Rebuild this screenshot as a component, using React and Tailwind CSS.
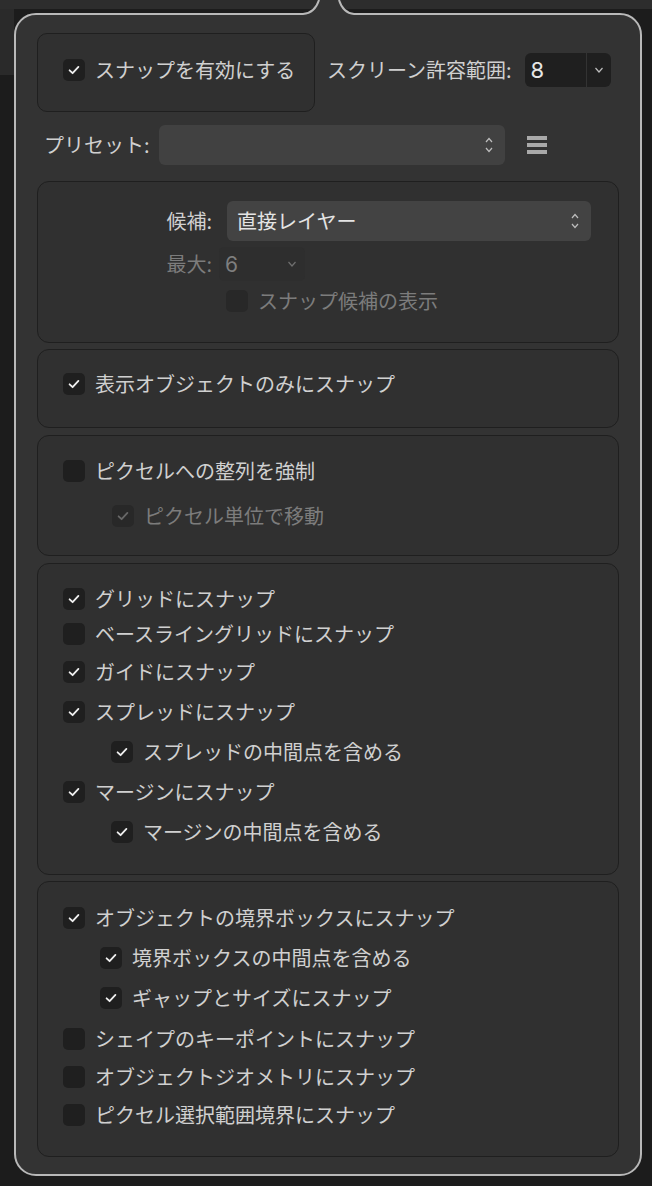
import React from "react";

const Check = ({ checked, dim }) => (
  <span
    className={`flex h-[22px] w-[22px] shrink-0 items-center justify-center rounded-[5px] ${
      dim ? "bg-[#282828]" : "bg-[#1f1f1f]"
    }`}
  >
    {checked && (
      <svg width="14" height="14" viewBox="0 0 14 14">
        <path
          d="M2.6 7.3 L5.6 10.2 L11.4 3.9"
          fill="none"
          stroke={dim ? "#676767" : "#efefef"}
          strokeWidth="1.8"
          strokeLinecap="round"
          strokeLinejoin="round"
        />
      </svg>
    )}
  </span>
);

const Row = ({ label, checked, dim, className = "" }) => (
  <div className={`flex h-[22px] items-center gap-[10px] ${className}`}>
    <Check checked={checked} dim={dim} />
    <span className={`whitespace-nowrap leading-none ${dim ? "text-[#7c7c7c]" : "text-[#d0d0d0]"}`}>
      {label}
    </span>
  </div>
);

const UpDown = () => (
  <svg width="10" height="20" viewBox="0 0 10 20">
    <path d="M2 7 L5 3.5 L8 7" fill="none" stroke="#bdbdbd" strokeWidth="1.2" />
    <path d="M2 13 L5 16.5 L8 13" fill="none" stroke="#bdbdbd" strokeWidth="1.2" />
  </svg>
);

const Down = ({ color = "#bdbdbd" }) => (
  <svg width="10" height="8" viewBox="0 0 10 8">
    <path d="M1.5 2 L5 6 L8.5 2" fill="none" stroke={color} strokeWidth="1.2" />
  </svg>
);

const Group = ({ className = "", children }) => (
  <div className={`rounded-[12px] border border-[#1f1f1f] bg-[#303030] ${className}`}>{children}</div>
);

export default function App() {
  return (
    <div className="relative h-[1186px] w-[652px] overflow-hidden bg-[#1c1c1c] font-['Noto_Sans_CJK_JP',sans-serif] text-[20px]">
      {/* fond derrière le popover */}
      <div className="h-[9px] bg-[#2d2d2d]" />
      <div className="flex">
        <div className="h-[66px] w-[14px] bg-[#2a2a2a]" />
      </div>

      {/* popover */}
      <div className="absolute left-[14px] top-[13px] h-[1163px] w-[628px] rounded-[22px] border-2 border-[#b9b9b9] bg-[#333333] px-[21px] pt-[18px]">
        {/* pointe */}
        <svg className="absolute left-[274px] top-[-15px]" width="70" height="18" viewBox="0 0 70 18">
          <path d="M6 18 L6 14 L13 14 Q25 13 29 0 L49 0 Q53 13 64 14 L66 14 L66 18 Z" fill="#333333" />
          <path d="M4 14 L13 14 Q25 13 29 0" fill="none" stroke="#b9b9b9" strokeWidth="2" />
          <path d="M49 0 Q53 13 64 14 L68 14" fill="none" stroke="#b9b9b9" strokeWidth="2" />
        </svg>

        {/* ligne 1 */}
        <div className="flex items-start">
          <div className="h-[79px] w-[278px] rounded-[10px] border border-[#1f1f1f] bg-[#303030] pl-[25px] pt-[25px]">
            <Row label="スナップを有効にする" checked />
          </div>
          <div className="ml-[12px] flex items-center pt-[20px]">
            <span className="whitespace-nowrap text-[#d0d0d0]">スクリーン許容範囲:</span>
            <div className="ml-[13px] flex h-[34px] w-[86px] items-center rounded-[6px] bg-[#1f1f1f]">
              <span className="w-[61px] pl-[6px] font-['Inter',sans-serif] text-[22px] leading-none text-[#e6e6e6]">8</span>
              <div className="h-full w-px bg-[#333333]" />
              <div className="flex flex-1 items-center justify-center">
                <Down />
              </div>
            </div>
          </div>
        </div>

        {/* préréglage */}
        <div className="mt-[13px] flex items-center">
          <span className="ml-[7px] w-[106px] whitespace-nowrap text-[#d0d0d0]">プリセット:</span>
          <div className="ml-[9px] flex h-[40px] w-[346px] items-center justify-end rounded-[6px] bg-[#414141] pr-[11px]">
            <UpDown />
          </div>
          <div className="ml-[22px] flex w-[20px] flex-col gap-[3.5px]">
            <div className="h-[3.5px] bg-[#a9a9a9]" />
            <div className="h-[3.5px] bg-[#a9a9a9]" />
            <div className="h-[3.5px] bg-[#a9a9a9]" />
          </div>
        </div>

        {/* candidats */}
        <Group className="mt-[16px] h-[162px] pt-[19px]">
          <div className="flex items-center">
            <span className="w-[174px] text-right text-[#d0d0d0]">候補:</span>
            <div className="ml-[15px] flex h-[40px] w-[364px] items-center justify-between rounded-[6px] bg-[#434343] pl-[10px] pr-[11px]">
              <span className="text-[#e4e4e4]">直接レイヤー</span>
              <UpDown />
            </div>
          </div>
          <div className="mt-[6px] flex items-center">
            <span className="w-[174px] text-right text-[#7c7c7c]">最大:</span>
            <div className="ml-[7px] flex h-[34px] items-center rounded-[5px] bg-[#2e2e2e]">
              <span className="w-[59px] pl-[6px] font-['Inter',sans-serif] text-[21px] leading-none text-[#7e7e7e]">6</span>
              <div className="flex w-[27px] items-center justify-center">
                <Down color="#6f6f6f" />
              </div>
            </div>
          </div>
          <Row label="スナップ候補の表示" dim className="ml-[188px] mt-[9px]" />
        </Group>

        {/* objets visibles */}
        <Group className="mt-[6px] h-[79px] pl-[25px] pt-[23px]">
          <Row label="表示オブジェクトのみにスナップ" checked />
        </Group>

        {/* pixels */}
        <Group className="mt-[7px] h-[121px] pl-[25px] pt-[24px]">
          <Row label="ピクセルへの整列を強制" />
          <Row label="ピクセル単位で移動" checked dim className="ml-[49px] mt-[23px]" />
        </Group>

        {/* grilles */}
        <Group className="mt-[7px] h-[312px] pl-[25px] pt-[24px]">
          <Row label="グリッドにスナップ" checked />
          <Row label="ベースライングリッドにスナップ" className="mt-[13px]" />
          <Row label="ガイドにスナップ" checked className="mt-[16px]" />
          <Row label="スプレッドにスナップ" checked className="mt-[18px]" />
          <Row label="スプレッドの中間点を含める" checked className="ml-[48px] mt-[18px]" />
          <Row label="マージンにスナップ" checked className="mt-[18px]" />
          <Row label="マージンの中間点を含める" checked className="ml-[48px] mt-[18px]" />
        </Group>

        {/* objets */}
        <Group className="mt-[6px] h-[276px] pl-[25px] pt-[25px]">
          <Row label="オブジェクトの境界ボックスにスナップ" checked />
          <Row label="境界ボックスの中間点を含める" checked className="ml-[37px] mt-[18px]" />
          <Row label="ギャップとサイズにスナップ" checked className="ml-[37px] mt-[18px]" />
          <Row label="シェイプのキーポイントにスナップ" className="mt-[19px]" />
          <Row label="オブジェクトジオメトリにスナップ" className="mt-[16px]" />
          <Row label="ピクセル選択範囲境界にスナップ" className="mt-[16px]" />
        </Group>
      </div>
    </div>
  );
}
